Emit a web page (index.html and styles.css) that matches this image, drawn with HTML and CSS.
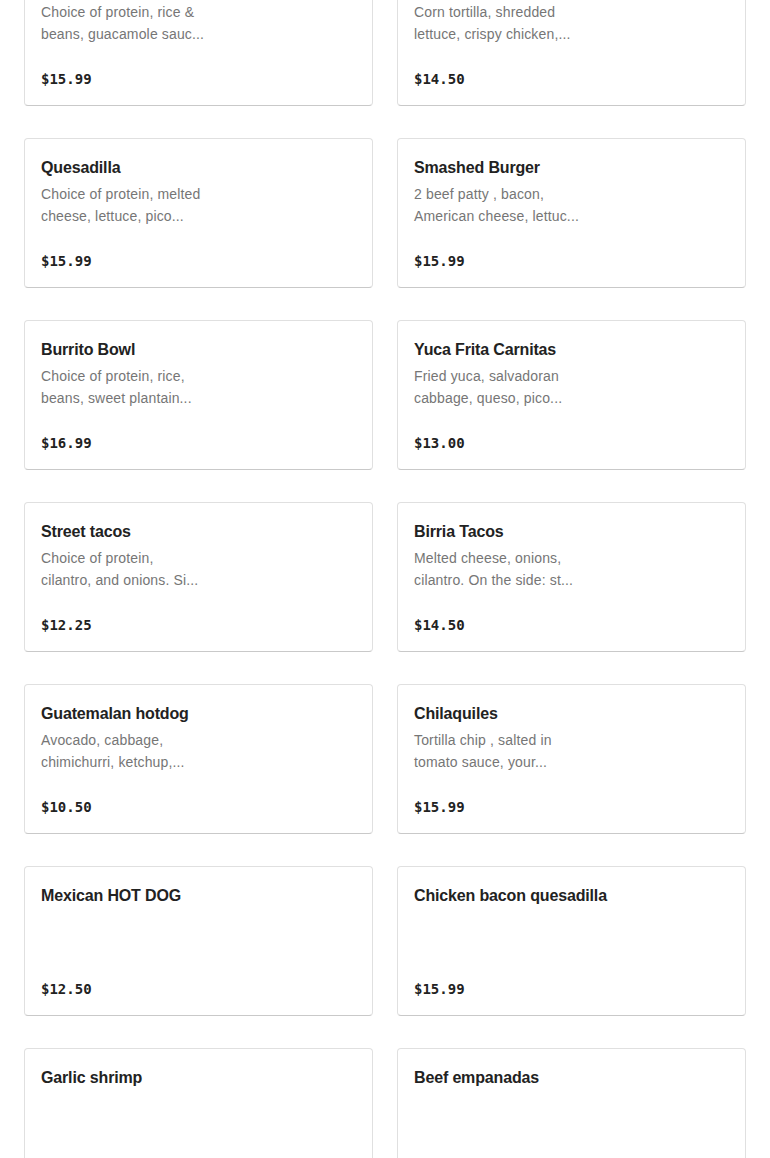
FILE: index.html
```html
<!DOCTYPE html>
<html lang="en">
<head>
<meta charset="utf-8">
<title>Menu</title>
<link rel="stylesheet" href="styles.css">
</head>
<body>
<main class="menu">
  <div class="card">
    <h3 class="title">Burrito</h3>
    <p class="desc"><span>Choice of protein, rice &amp;</span><span>beans, guacamole sauc...</span></p>
    <div class="price">$15.99</div>
  </div>
  <div class="card">
    <h3 class="title">Flautas</h3>
    <p class="desc"><span>Corn tortilla, shredded</span><span>lettuce, crispy chicken,...</span></p>
    <div class="price">$14.50</div>
  </div>
  <div class="card">
    <h3 class="title">Quesadilla</h3>
    <p class="desc"><span>Choice of protein, melted</span><span>cheese, lettuce, pico...</span></p>
    <div class="price">$15.99</div>
  </div>
  <div class="card">
    <h3 class="title">Smashed Burger</h3>
    <p class="desc"><span>2 beef patty , bacon,</span><span>American cheese, lettuc...</span></p>
    <div class="price">$15.99</div>
  </div>
  <div class="card">
    <h3 class="title">Burrito Bowl</h3>
    <p class="desc"><span>Choice of protein, rice,</span><span>beans, sweet plantain...</span></p>
    <div class="price">$16.99</div>
  </div>
  <div class="card">
    <h3 class="title">Yuca Frita Carnitas</h3>
    <p class="desc"><span>Fried yuca, salvadoran</span><span>cabbage, queso, pico...</span></p>
    <div class="price">$13.00</div>
  </div>
  <div class="card">
    <h3 class="title">Street tacos</h3>
    <p class="desc"><span>Choice of protein,</span><span>cilantro, and onions. Si...</span></p>
    <div class="price">$12.25</div>
  </div>
  <div class="card">
    <h3 class="title">Birria Tacos</h3>
    <p class="desc"><span>Melted cheese, onions,</span><span>cilantro. On the side: st...</span></p>
    <div class="price">$14.50</div>
  </div>
  <div class="card">
    <h3 class="title">Guatemalan hotdog</h3>
    <p class="desc"><span>Avocado, cabbage,</span><span>chimichurri, ketchup,...</span></p>
    <div class="price">$10.50</div>
  </div>
  <div class="card">
    <h3 class="title">Chilaquiles</h3>
    <p class="desc"><span>Tortilla chip , salted in</span><span>tomato sauce, your...</span></p>
    <div class="price">$15.99</div>
  </div>
  <div class="card">
    <h3 class="title">Mexican HOT DOG</h3>
    <div class="price">$12.50</div>
  </div>
  <div class="card">
    <h3 class="title">Chicken bacon quesadilla</h3>
    <div class="price">$15.99</div>
  </div>
  <div class="card">
    <h3 class="title">Garlic shrimp</h3>
    <div class="price">$15.99</div>
  </div>
  <div class="card">
    <h3 class="title">Beef empanadas</h3>
    <div class="price">$12.99</div>
  </div>
</main>
</body>
</html>
```
FILE: styles.css
```css
html, body {
  margin: 0;
  padding: 0;
  background: #ffffff;
}
body {
  font-family: "Liberation Sans", Arial, sans-serif;
  color: #191919;
  overflow: hidden;
}
.menu {
  display: grid;
  grid-template-columns: 349px 349px;
  column-gap: 24px;
  row-gap: 32px;
  padding: 0 24px;
  margin-top: -44px;
}
.card {
  box-sizing: border-box;
  height: 150px;
  border: 1px solid #e0e0e0;
  border-bottom-color: #c9c9c9;
  border-radius: 4px;
  padding: 17px 16px 14px;
  display: flex;
  flex-direction: column;
  background: #fff;
}
.title {
  margin: 0;
  font-size: 16px;
  line-height: 24px;
  font-weight: 700;
  color: #222222;
  letter-spacing: -0.15px;
}
.desc {
  margin: 3px 0 0 0;
  font-size: 14px;
  line-height: 22px;
  color: #767676;
  letter-spacing: 0.15px;
}
.desc span {
  display: block;
  white-space: nowrap;
}
.price {
  margin-top: auto;
  font-family: "DejaVu Sans Mono", "Liberation Mono", monospace;
  font-size: 14px;
  line-height: 24px;
  font-weight: 700;
  color: #222222;
}
```
